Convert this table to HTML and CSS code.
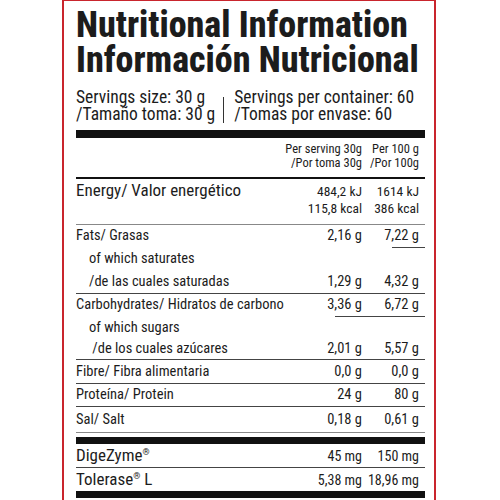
FILE: index.html
```html
<!DOCTYPE html>
<html lang="es">
<head>
    <meta charset="UTF-8">
    <title>Nutritional Information</title>
    <link rel="stylesheet" href="styles.css">
</head>
<body>
    <!-- --- LABEL FRAME --- -->
    <div class="label">
        <h1 class="title">Nutritional Information<br>Información Nutricional</h1>

        <div class="servings">
            <div class="serv-col">Servings size: 30 g<br>/Tamaño toma: 30 g</div>
            <span class="serv-divider"></span>
            <div class="serv-col">Servings per container: 60<br>/Tomas por envase: 60</div>
        </div>

        <div class="bar first"></div>

        <!-- --- TABLE --- -->
        <div class="row head">
            <span></span>
            <span class="val">Per serving 30g<br>/Por toma 30g</span>
            <span class="val">Per 100 g<br>/Por 100g</span>
        </div>

        <div class="row energy">
            <span class="name big">Energy/ Valor energético</span>
            <span class="val">484,2 kJ<br>115,8 kcal</span>
            <span class="val">1614 kJ<br>386 kcal</span>
        </div>

        <div class="row short-rule">
            <span class="name">Fats/ Grasas</span>
            <span class="val">2,16 g</span>
            <span class="val">7,22 g</span>
        </div>
        <div class="row sub">
            <span class="name">of which saturates<br>/de las cuales saturadas</span>
            <span class="val"><br>1,29 g</span>
            <span class="val"><br>4,32 g</span>
        </div>
        <div class="row mid-rule">
            <span class="name">Carbohydrates/ Hidratos de carbono</span>
            <span class="val">3,36 g</span>
            <span class="val">6,72 g</span>
        </div>
        <div class="row sub tight">
            <span class="name">of which sugars<br>&nbsp;/de los cuales azúcares</span>
            <span class="val"><br>2,01 g</span>
            <span class="val"><br>5,57 g</span>
        </div>
        <div class="row tall">
            <span class="name">Fibre/ Fibra alimentaria</span>
            <span class="val">0,0 g</span>
            <span class="val">0,0 g</span>
        </div>
        <div class="row">
            <span class="name">Proteína/ Protein</span>
            <span class="val">24 g</span>
            <span class="val">80 g</span>
        </div>
        <div class="row last">
            <span class="name">Sal/ Salt</span>
            <span class="val">0,18 g</span>
            <span class="val">0,61 g</span>
        </div>

        <div class="bar"></div>

        <div class="row extra">
            <span class="name big">DigeZyme<sup>®</sup></span>
            <span class="val">45 mg</span>
            <span class="val">150 mg</span>
        </div>
        <div class="row extra no-rule">
            <span class="name big">Tolerase<sup>®</sup> L</span>
            <span class="val">5,38 mg</span>
            <span class="val">18,96 mg</span>
        </div>

        <div class="bar"></div>
    </div>
</body>
</html>
```

FILE: styles.css
```css
/* --- RESET & GLOBAL STYLES --- */
* {
    margin: 0;
    padding: 0;
    box-sizing: border-box;
}

body {
    background-color: #fff;
    font-family: Roboto, "Open Sans", sans-serif;
    font-stretch: 75%;
    color: #1c1c1c;
}

/* --- FRAME --- */
.label {
    width: 374px;
    margin-left: 62px;
    border: 2px solid #c9252d;
    border-top-width: 1px;
    padding: 7px 9px 4px 12px;
}

.title {
    font-size: 36px;
    line-height: 35px;
    font-weight: 800;
}

/* --- SERVINGS --- */
.servings {
    display: flex;
    align-items: flex-end;
    margin-top: 11px;
    font-size: 17.5px;
    line-height: 17px;
    white-space: nowrap;
}

.serv-divider {
    width: 1px;
    height: 26px;
    background-color: #333;
    margin: 0 10px 0 8px;
}

.bar {
    height: 7px;
    background-color: #111;
}

.bar.first {
    height: 8px;
    margin-top: 7px;
}

/* --- TABLE ROWS --- */
.row {
    display: grid;
    grid-template-columns: 1fr 60px 57px;
    align-items: baseline;
    padding-right: 6px;
    font-size: 14.5px;
    line-height: 22px;
    white-space: nowrap;
    border-bottom: 1px solid #444;
}

.val {
    text-align: right;
}

.head {
    grid-template-columns: 1fr 95px 57px;
    font-size: 12.5px;
    line-height: 14px;
    padding: 4px 6px 7px 0;
    border-bottom: 2px solid #111;
}

.energy {
    grid-template-columns: 1fr 95px 57px;
    padding-top: 3px;
    padding-bottom: 7px;
    font-size: 13.5px;
    line-height: 17px;
    border-bottom-color: #888;
}

.big {
    font-size: 17px;
}

.sub .name {
    padding-left: 13px;
}

.sub {
    line-height: 22.5px;
}

.sub.tight {
    line-height: 21px;
}

.tall {
    line-height: 23px;
}

.short-rule {
    border-bottom: none;
    padding-bottom: 1px;
    background: linear-gradient(#444, #444) no-repeat right bottom / 33px 1px;
}

.mid-rule {
    border-bottom: none;
    padding-bottom: 1px;
    background: linear-gradient(#444, #444) no-repeat right bottom / 90px 1px;
}

.last {
    line-height: 25px;
    border-bottom-color: #888;
}

.last + .bar {
    margin-top: 4px;
}

.extra {
    font-size: 14px;
}

.extra sup {
    font-size: 9px;
    vertical-align: 6px;
    line-height: 0;
}

.no-rule {
    border-bottom: none;
}
```
